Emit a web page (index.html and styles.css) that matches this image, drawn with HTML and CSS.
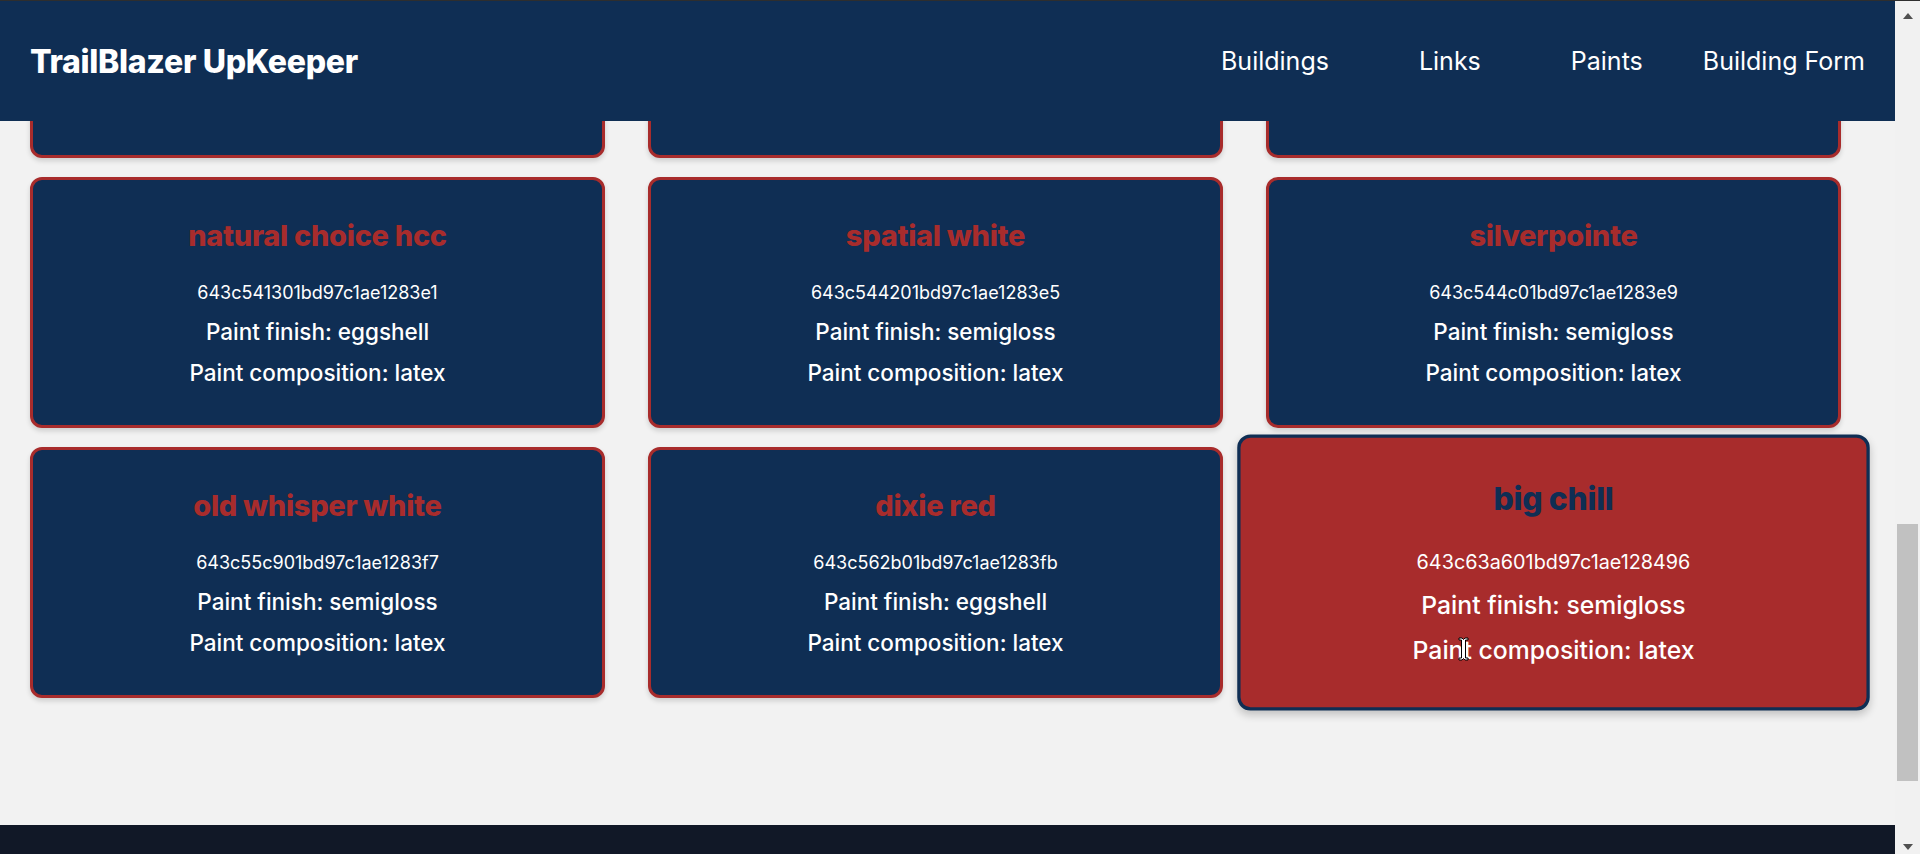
FILE: index.html
```html
<!DOCTYPE html>
<html lang="en">
<head>
    <meta charset="UTF-8">
    <meta name="viewport" content="width=device-width, initial-scale=1.0">
    <title>TrailBlazer UpKeeper - Paints</title>
    <link rel="stylesheet" href="styles.css">
</head>
<body>
    <div class="window">
        <div class="page">
            <!-- Header -->
            <header class="navbar">
                <div class="brand">TrailBlazer UpKeeper</div>
                <nav class="nav-links">
                    <a href="#" class="nav-link">Buildings</a>
                    <a href="#" class="nav-link">Links</a>
                    <a href="#" class="nav-link">Paints</a>
                    <a href="#" class="nav-link last">Building Form</a>
                </nav>
            </header>

            <!-- Paint cards (scrolled to the bottom) -->
            <main class="paints">
                <div class="paint-grid">
                    <!-- row scrolled up under the header -->
                    <div class="paint-card"></div>
                    <div class="paint-card"></div>
                    <div class="paint-card"></div>

                    <div class="paint-card">
                        <h2 class="paint-name">natural choice hcc</h2>
                        <p class="paint-id">643c541301bd97c1ae1283e1</p>
                        <p class="paint-info">Paint finish: eggshell</p>
                        <p class="paint-info">Paint composition: latex</p>
                    </div>
                    <div class="paint-card">
                        <h2 class="paint-name">spatial white</h2>
                        <p class="paint-id">643c544201bd97c1ae1283e5</p>
                        <p class="paint-info">Paint finish: semigloss</p>
                        <p class="paint-info">Paint composition: latex</p>
                    </div>
                    <div class="paint-card">
                        <h2 class="paint-name">silverpointe</h2>
                        <p class="paint-id">643c544c01bd97c1ae1283e9</p>
                        <p class="paint-info">Paint finish: semigloss</p>
                        <p class="paint-info">Paint composition: latex</p>
                    </div>

                    <div class="paint-card">
                        <h2 class="paint-name">old whisper white</h2>
                        <p class="paint-id">643c55c901bd97c1ae1283f7</p>
                        <p class="paint-info">Paint finish: semigloss</p>
                        <p class="paint-info">Paint composition: latex</p>
                    </div>
                    <div class="paint-card">
                        <h2 class="paint-name">dixie red</h2>
                        <p class="paint-id">643c562b01bd97c1ae1283fb</p>
                        <p class="paint-info">Paint finish: eggshell</p>
                        <p class="paint-info">Paint composition: latex</p>
                    </div>
                    <div class="paint-card hovered">
                        <h2 class="paint-name">big chill</h2>
                        <p class="paint-id">643c63a601bd97c1ae128496</p>
                        <p class="paint-info">Paint finish: semigloss</p>
                        <p class="paint-info">Paint composition: latex</p>
                    </div>
                </div>
            </main>

            <footer class="footer"></footer>
        </div>

        <!-- Browser scrollbar -->
        <div class="scrollbar">
            <div class="arrow up"></div>
            <div class="track">
                <div class="thumb"></div>
            </div>
            <div class="arrow down"></div>
        </div>
    </div>

    <!-- text cursor over the hovered card -->
    <svg class="cursor" width="11" height="24" viewBox="0 0 11 24">
        <path d="M1 1h3l1.5 1.5L7 1h3v2H7.5v18H10v2H7l-1.5-1.5L4 23H1v-2h2.5V3H1z" fill="#fff" stroke="#000" stroke-width="1"/>
    </svg>
</body>
</html>
```

FILE: styles.css
```css
* { margin: 0; padding: 0; box-sizing: border-box; }
body {
    font-family: Inter, "Open Sans", sans-serif;
    background: #f2f2f2;
    height: 854px;
    overflow: hidden;
}
.window {
    display: flex;
    height: 854px;
    border-top: 1px solid #2e2e2e;
}
.page {
    flex: 1;
    display: flex;
    flex-direction: column;
    overflow: hidden;
}
.navbar {
    flex: none;
    height: 120px;
    background: #0f2e54;
    display: flex;
    align-items: center;
    justify-content: space-between;
    padding: 0 30px;
    position: relative;
    z-index: 10;
}
.brand {
    color: white;
    font-size: 32px;
    font-weight: 800;
    letter-spacing: -0.3px;
}
.nav-links { display: flex; align-items: center; }
.nav-link {
    color: white;
    text-decoration: none;
    font-size: 25px;
    margin-left: 90px;
}
.nav-link.last { margin-left: 60px; }

.paints { flex: 1; overflow: hidden; }
.paint-grid {
    display: grid;
    grid-template-columns: repeat(3, 575px);
    column-gap: 43px;
    row-gap: 19px;
    padding: 0 0 10px 30px;
    margin-top: -214px;
}
.paint-card {
    background: #0f2e54;
    border: 3px solid #a82c2c;
    border-radius: 12px;
    box-shadow: 0 3px 5px rgba(0,0,0,0.15);
    text-align: center;
    color: white;
    padding: 39px 20px 0;
    height: 251px;
}
.paint-name {
    color: #a82c2c;
    font-size: 29px;
    font-weight: 800;
    line-height: 34px;
    letter-spacing: -0.3px;
    margin-bottom: 28px;
}
.paint-id { font-size: 18px; line-height: 24px; margin-bottom: 12px; }
.paint-info { font-size: 22.5px; font-weight: 500; line-height: 30px; margin-bottom: 11px; }
.paint-info:last-child { margin-bottom: 0; }
.paint-card.hovered {
    background: #a82c2c;
    border-color: #0f2e54;
    transform: scale(1.1);
    box-shadow: 0 4px 8px rgba(0,0,0,0.2);
}
.paint-card.hovered .paint-name { color: #0f2e54; }

.footer {
    flex: none;
    height: 29px;
    background: #111827;
}

.scrollbar {
    width: 25px;
    background: #f1f1f1;
    display: flex;
    flex-direction: column;
    align-items: center;
}
.arrow { width: 0; height: 0; border-left: 5px solid transparent; border-right: 5px solid transparent; }
.arrow.up { border-bottom: 6px solid #505050; margin: 12px 0 8px; }
.arrow.down { border-top: 6px solid #505050; margin: 8px 0 4px; }
.track { flex: 1; width: 100%; display: flex; justify-content: center; }
.thumb { width: 21px; height: 257px; background: #c1c1c1; margin-top: 497px; }

.cursor {
    position: fixed;
    left: 1458px;
    top: 637px;
    z-index: 20;
}
```
